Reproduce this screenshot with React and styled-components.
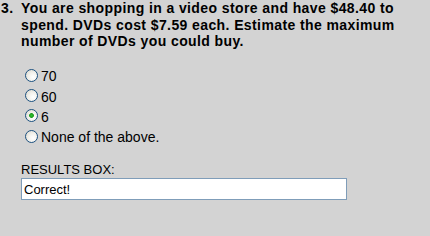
import React from 'react';
import styled, { createGlobalStyle } from 'styled-components';

const GlobalStyle = createGlobalStyle`
    html, body {
        margin: 0;
        padding: 0;
        background: #d3d3d3;
    }

    #root {
        height: 236px;
    }
`

const Page = styled.div`
    width: 430px;
    height: 236px;
    background: #d3d3d3;
    color: #000;
    font-family: "Liberation Sans", Arial, sans-serif;
    overflow: hidden;
`

const Question = styled.div`
    display: flex;
    font-size: 14px;
    font-weight: 700;
    letter-spacing: 0.4px;
    line-height: 16.7px;

    .number {
        width: 20px;
        padding-left: 1px;
        flex-shrink: 0;
    }

    p {
        margin: 0;
        flex: 1;
    }
`

const Options = styled.ul`
    list-style: none;
    margin: 16px 0 0 25px;
    padding: 0;
`

const Option = styled.li`
    height: 20.3px;
    display: flex;
    align-items: center;
    font-size: 14px;

    label {
        display: flex;
        align-items: center;
        gap: 3px;
    }
`

const Radio = styled.input.attrs({ type: 'radio' })`
    appearance: none;
    width: 13px;
    height: 13px;
    margin: 0 0 2px 0;
    border: 1px solid #1c5180;
    border-radius: 50%;
    box-sizing: border-box;
    background: radial-gradient(circle at 65% 65%, #ffffff 0%, #f2f1ec 45%, #d6d3c8 100%);

    &:checked {
        background:
            radial-gradient(circle at 50% 50%, #2fc22f 0px, #1f9e1f 2px, transparent 2.8px),
            radial-gradient(circle at 65% 65%, #ffffff 0%, #f2f1ec 45%, #d6d3c8 100%);
    }
`

const Results = styled.div`
    margin: 15px 0 0 21px;

    label {
        display: block;
        font-size: 13px;
        line-height: 15px;
    }

    input {
        display: block;
        margin-top: 1px;
        width: 326px;
        height: 22px;
        box-sizing: border-box;
        border: 1px solid #7f9db9;
        background: #fff;
        padding: 0 2px;
        font-family: "Liberation Sans", Arial, sans-serif;
        font-size: 13px;
        color: #000;
        outline: none;
    }
`

const choices = ['70', '60', '6', 'None of the above.']

const App = () => {
    return (
        <Page>
            <GlobalStyle />
            <Question>
                <span className="number">3.</span>
                <p>You are shopping in a video store and have $48.40 to spend. DVDs cost $7.59 each. Estimate the maximum number of DVDs you could buy.</p>
            </Question>
            <Options>
                {choices.map((c) => (
                    <Option key={c}>
                        <label>
                            <Radio name="q3" defaultChecked={c === '6'} />
                            {c}
                        </label>
                    </Option>
                ))}
            </Options>
            <Results>
                <label>RESULTS BOX:</label>
                <input readOnly value="Correct!" />
            </Results>
        </Page>
    )
}

export default App
